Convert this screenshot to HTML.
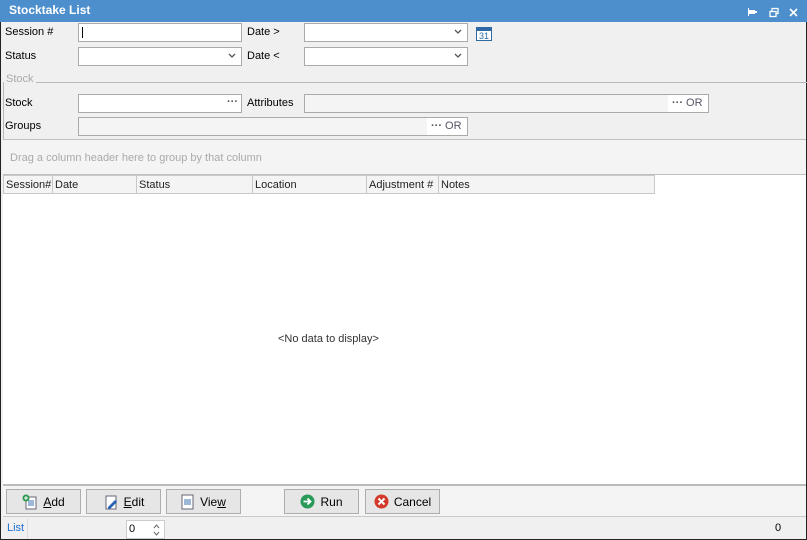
<!DOCTYPE html>
<html><head><style>
*{box-sizing:border-box;margin:0;padding:0}
body{width:807px;height:540px;overflow:hidden;font-family:"Liberation Sans",Tahoma,sans-serif;font-size:11px;color:#000;background:#f0f0f0;position:relative}
.a{position:absolute}
.inp{position:absolute;background:#fff;border:1px solid #aaa;height:19px}
.g{background:#f4f4f4}
.lbl{position:absolute;font-size:11px}
.chev{position:absolute;right:4px;top:3px;width:10px;height:10px}
.btn{position:absolute;top:489px;height:25px;border:1px solid #adadad;background:#e6e6e6;display:flex;align-items:center;justify-content:center;font-size:12px;gap:5px}
.hd{position:absolute;top:175px;height:19px;border:1px solid #c8c8c8;background:#f4f4f4;font-size:11px;padding:3px 2px;color:#222}
</style></head><body>
<div class="a" style="left:0;top:0;width:807px;height:540px;border:1px solid #222;border-top:none"></div>
<div class="a" style="left:0;top:0;width:807px;height:22px;background:#4d8fcc"></div>
<div class="a" style="left:9px;top:3px;color:#fff;font-weight:bold;font-size:12px">Stocktake List</div>
<svg class="a" style="left:748px;top:7px" width="50" height="12" viewBox="0 0 50 12">
<g fill="#fff"><rect x="1" y="3" width="6" height="4"/><rect x="0" y="1" width="1" height="8"/><rect x="7" y="4" width="2" height="2"/></g>
<g fill="none" stroke="#fff" stroke-width="1.3"><rect x="22" y="4.5" width="6" height="5"/><path d="M24 4.5V1.5h6v5h-2"/><path d="M42 2l7 7M49 2l-7 7" stroke-width="1.6"/></g>
</svg>
<div class="lbl" style="left:5px;top:26px">Session #</div>
<div class="inp" style="left:78px;top:23px;width:164px"><div class="a" style="left:3px;top:3px;width:1px;height:11px;background:#000"></div></div>
<div class="lbl" style="left:247px;top:26px">Date &gt;</div>
<div class="inp" style="left:304px;top:23px;width:164px"><svg class="chev" viewBox="0 0 10 10"><path d="M2 3l3 3 3-3" stroke="#555" stroke-width="1.3" fill="none"/></svg></div>
<svg class="a" style="left:476px;top:25px" width="17" height="17" viewBox="0 0 17 17"><rect x=".5" y="2.5" width="15" height="13" fill="#fff" stroke="#2f6aa6"/><rect x="1" y="3" width="14" height="3" fill="#2f6aa6"/><text x="3" y="14" font-size="9" fill="#2f6aa6" font-family="Liberation Sans">31</text></svg>
<div class="lbl" style="left:5px;top:50px">Status</div>
<div class="inp" style="left:78px;top:47px;width:164px"><svg class="chev" viewBox="0 0 10 10"><path d="M2 3l3 3 3-3" stroke="#555" stroke-width="1.3" fill="none"/></svg></div>
<div class="lbl" style="left:247px;top:50px">Date &lt;</div>
<div class="inp" style="left:304px;top:47px;width:164px"><svg class="chev" viewBox="0 0 10 10"><path d="M2 3l3 3 3-3" stroke="#555" stroke-width="1.3" fill="none"/></svg></div>
<div class="lbl" style="left:6px;top:73px;color:#aaa">Stock</div>
<div class="a" style="left:36px;top:82px;width:771px;height:1px;background:#b4b9be"></div>
<div class="a" style="left:3px;top:82px;width:1px;height:58px;background:#b4b9be"></div>
<div class="lbl" style="left:5px;top:97px">Stock</div>
<div class="inp" style="left:78px;top:94px;width:164px"><span class="a" style="right:3px;top:1px;color:#555;font-weight:bold">···</span></div>
<div class="lbl" style="left:247px;top:97px">Attributes</div>
<div class="inp g" style="left:304px;top:94px;width:405px"><span class="a" style="right:0;top:0;width:40px;height:17px;background:#fff;color:#556;padding:2px 0 0 4px"><b style="color:#555">···</b> OR</span></div>
<div class="lbl" style="left:5px;top:120px">Groups</div>
<div class="inp g" style="left:78px;top:117px;width:390px"><span class="a" style="right:0;top:0;width:40px;height:17px;background:#fff;color:#556;padding:2px 0 0 4px"><b style="color:#555">···</b> OR</span></div>
<div class="a" style="left:3px;top:139px;width:803px;height:36px;background:#f4f4f4;border-top:1px solid #c0c0c0;border-bottom:1px solid #c0c0c0"></div>
<div class="lbl" style="left:10px;top:152px;color:#aaa">Drag a column header here to group by that column</div>
<div class="a" style="left:3px;top:175px;width:803px;height:310px;background:#fff"></div>
<div class="hd" style="left:3px;width:50px">Session#</div>
<div class="hd" style="left:52px;width:85px">Date</div>
<div class="hd" style="left:136px;width:117px">Status</div>
<div class="hd" style="left:252px;width:115px">Location</div>
<div class="hd" style="left:366px;width:73px">Adjustment #</div>
<div class="hd" style="left:438px;width:217px">Notes</div>
<div class="lbl" style="left:278px;top:333px;color:#333">&lt;No data to display&gt;</div>
<div class="a" style="left:3px;top:484px;width:803px;height:33px;background:#f4f4f4;border-top:2px solid #bbb;border-bottom:1px solid #c8c8c8"></div>
<div class="btn" style="left:6px;width:75px"><svg width="16" height="16" viewBox="0 0 16 16"><rect x="4" y="3" width="10" height="12" fill="#fff" stroke="#667"/><path d="M6 7h6M6 9h6M6 11h6" stroke="#3a6fb0"/><circle cx="4" cy="4" r="3.5" fill="#2a9a50"/><path d="M4 2v4M2 4h4" stroke="#fff"/></svg><span><u>A</u>dd</span></div>
<div class="btn" style="left:86px;width:75px"><svg width="16" height="16" viewBox="0 0 16 16"><rect x="3" y="2" width="10" height="13" fill="#fff" stroke="#667"/><path d="M5 13l7-7 2 2-7 7H5z" fill="#2a62b8"/></svg><span><u>E</u>dit</span></div>
<div class="btn" style="left:166px;width:75px"><svg width="14" height="16" viewBox="0 0 14 16"><rect x="1" y="1" width="11" height="14" fill="#fff" stroke="#667"/><path d="M3 6h7M3 8h7M3 10h7" stroke="#3a6fb0"/></svg><span>Vie<u>w</u></span></div>
<div class="btn" style="left:284px;width:75px"><svg width="15" height="15" viewBox="0 0 15 15"><circle cx="7.5" cy="7.5" r="7" fill="#2a9a5a"/><path d="M3.5 7.5h7M7.5 4.5l3 3-3 3" stroke="#fff" stroke-width="1.8" fill="none"/></svg><span>Run</span></div>
<div class="btn" style="left:365px;width:75px"><svg width="15" height="15" viewBox="0 0 15 15"><circle cx="7.5" cy="7.5" r="7" fill="#d33a2c"/><path d="M4.5 4.5l6 6M10.5 4.5l-6 6" stroke="#fff" stroke-width="2"/></svg><span>Cancel</span></div>
<div class="lbl" style="left:7px;top:522px;color:#1a6fd0">List</div>
<div class="a" style="left:27px;top:518px;width:779px;height:21px;background:#f0f0f0;border-left:1px solid #ddd"></div>
<div class="a" style="left:126px;top:520px;width:39px;height:19px;background:#fff;border:1px solid #ccc"><span class="a" style="left:2px;top:2px">0</span><svg class="a" style="right:4px;top:2px" width="7" height="14" viewBox="0 0 7 14"><path d="M1 5l2.5-3 2.5 3M1 9l2.5 3 2.5-3" stroke="#666" fill="none"/></svg></div>
<div class="lbl" style="left:775px;top:522px">0</div>
</body></html>
